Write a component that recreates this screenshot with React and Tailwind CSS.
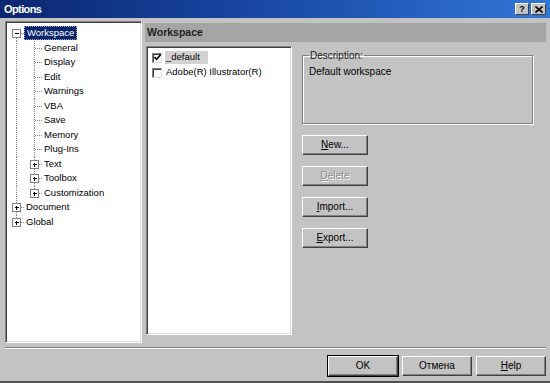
import React from 'react';

// tree rows: guide cells per indent column + optional expand box
const treeRows = [
  { label: 'Workspace', cells: ['first'], box: 'minus', selected: true },
  { label: 'General', cells: ['pipe', 'tee'] },
  { label: 'Display', cells: ['pipe', 'tee'] },
  { label: 'Edit', cells: ['pipe', 'tee'] },
  { label: 'Warnings', cells: ['pipe', 'tee'] },
  { label: 'VBA', cells: ['pipe', 'tee'] },
  { label: 'Save', cells: ['pipe', 'tee'] },
  { label: 'Memory', cells: ['pipe', 'tee'] },
  { label: 'Plug-Ins', cells: ['pipe', 'tee'] },
  { label: 'Text', cells: ['pipe', 'tee'], box: 'plus' },
  { label: 'Toolbox', cells: ['pipe', 'tee'], box: 'plus' },
  { label: 'Customization', cells: ['pipe', 'ell'], box: 'plus' },
  { label: 'Document', cells: ['tee'], box: 'plus' },
  { label: 'Global', cells: ['ell'], box: 'plus' },
];

const GuideCell = ({ type, box }) => {
  const dot = { stroke: '#8a8a8a', strokeWidth: 1, strokeDasharray: '1 1', shapeRendering: 'crispEdges' };
  return (
    <svg width="18" height="14.5" viewBox="0 0 18 14.5" className="shrink-0 overflow-visible">
      {type === 'pipe' && <line x1="9.5" y1="0" x2="9.5" y2="14.5" style={dot} />}
      {type === 'tee' && <line x1="9.5" y1="0" x2="9.5" y2="14.5" style={dot} />}
      {type === 'ell' && <line x1="9.5" y1="0" x2="9.5" y2="7.5" style={dot} />}
      {type === 'first' && <line x1="9.5" y1="7.5" x2="9.5" y2="14.5" style={dot} />}
      {type !== 'pipe' && <line x1="10" y1="7.5" x2="18" y2="7.5" style={dot} />}
      {box && (
        <g shapeRendering="crispEdges">
          <rect x="5.5" y="3.5" width="8" height="8" fill="white" stroke="#808080" />
          <line x1="7.5" y1="7.5" x2="11.5" y2="7.5" stroke="black" />
          {box === 'plus' && <line x1="9.5" y1="5.5" x2="9.5" y2="9.5" stroke="black" />}
        </g>
      )}
    </svg>
  );
};

const Btn = ({ children, w = 'w-[66px]', disabled, isDefault }) => (
  <button
    className={`${w} h-[20px] bg-[#c3c3c3] border border-t-white border-l-white border-r-[#404040] border-b-[#404040] text-[10px] leading-none ${
      isDefault
        ? 'shadow-[0_0_0_1px_#000,inset_-1px_-1px_0_#808080]'
        : 'shadow-[inset_-1px_-1px_0_#808080]'
    } ${disabled ? 'text-[#8c8c8c] [text-shadow:1px_1px_0_#fff]' : 'text-black'}`}
  >
    {children}
  </button>
);

const sunken =
  'bg-white border border-t-[#808080] border-l-[#808080] border-r-white border-b-white shadow-[inset_1px_1px_0_#404040,inset_-1px_-1px_0_#dcdcdc]';

export default function App() {
  return (
    <div className="w-[550px] h-[383px] bg-[#c3c3c3] flex flex-col border-b-2 border-b-[#505050] font-['Liberation_Sans',Arial,sans-serif] text-[10px] text-black overflow-hidden">
      {/* title bar */}
      <div className="h-[18px] shrink-0 flex items-center justify-between pl-[4px] pr-[4px] bg-gradient-to-r from-[#0b2670] via-[#1a4aa8] to-[#3277d6]">
        <span className="text-white font-bold text-[11px] tracking-[-0.6px]">Options</span>
        <div className="flex gap-[2px]">
          <div className="w-[14px] h-[12px] bg-[#c3c3c3] border border-t-white border-l-white border-r-[#404040] border-b-[#404040] flex items-center justify-center text-[9px] font-bold leading-none">
            ?
          </div>
          <div className="w-[15px] h-[12px] bg-[#c3c3c3] border border-t-white border-l-white border-r-[#404040] border-b-[#404040] flex items-center justify-center">
            <svg width="8" height="7" viewBox="0 0 8 7">
              <path d="M0.5 0.5 L7.5 6.5 M7.5 0.5 L0.5 6.5" stroke="black" strokeWidth="1.6" />
            </svg>
          </div>
        </div>
      </div>

      {/* body */}
      <div className="flex pt-[3px] pl-[5px] shrink-0">
        {/* tree */}
        <div className={`w-[137px] h-[322px] ${sunken} pt-[4px] pl-[1px]`}>
          {treeRows.map((r) => (
            <div key={r.label} className="flex items-center h-[14.5px]">
              {r.cells.map((c, i) => (
                <GuideCell key={i} type={c} box={i === r.cells.length - 1 ? r.box : null} />
              ))}
              <span
                className={`-ml-[1px] px-[2px] h-[14px] flex items-center text-[9.5px] whitespace-nowrap ${
                  r.selected ? 'bg-[#0a246a] text-white border border-dotted border-[#a0a0d0]' : ''
                }`}
              >
                {r.label}
              </span>
            </div>
          ))}
        </div>

        {/* right panel */}
        <div className="ml-[3px] w-[401px] flex flex-col">
          <div className="mt-[2px] h-[19px] bg-[#a5a5a5] flex items-center pl-[2px] font-bold text-[10.5px] text-[#1e1e1e]">
            Workspace
          </div>
          <div className="flex mt-[4px]">
            <div className={`ml-[1px] w-[146px] h-[289px] ${sunken} pt-[3px] pl-[5px]`}>
              {[
                { label: '_default', checked: true, sel: true },
                { label: 'Adobe(R) Illustrator(R)' },
              ].map((it) => (
                <div key={it.label} className="flex items-center h-[15px]">
                  <div className="w-[10px] h-[10px] bg-white border border-t-[#808080] border-l-[#808080] border-r-[#dcdcdc] border-b-[#dcdcdc] shadow-[inset_1px_1px_0_#404040] flex items-center justify-center">
                    {it.checked && (
                      <svg width="7" height="7" viewBox="0 0 7 7">
                        <path d="M0.5 3 L2.5 5.2 L6.5 0.8" stroke="black" strokeWidth="1.6" fill="none" />
                      </svg>
                    )}
                  </div>
                  <span className={`ml-[3px] px-[1px] h-[13px] flex items-center text-[9.5px] ${it.sel ? 'bg-[#d2d2d2] pr-[8px]' : ''}`}>
                    {it.label}
                  </span>
                </div>
              ))}
            </div>

            <div className="ml-[10px] w-[231px] flex flex-col">
              <fieldset className="mt-[2px] h-[76px] border border-[#808080] shadow-[inset_1px_1px_0_#fff,1px_1px_0_#fff] px-[6px]">
                <legend className="px-[1px] text-[10px] text-[#202020]">Description:</legend>
                <div className="mt-[1px]">Default workspace</div>
              </fieldset>
              <div className="mt-[11px] flex flex-col gap-[11px]">
                <Btn>
                  <span className="underline">N</span>ew...
                </Btn>
                <Btn disabled>
                  <span className="underline">D</span>elete
                </Btn>
                <Btn>
                  <span className="underline">I</span>mport...
                </Btn>
                <Btn>
                  <span className="underline">E</span>xport...
                </Btn>
              </div>
            </div>
          </div>
        </div>
      </div>

      {/* separator */}
      <div className="mt-[4px] ml-[5px] mr-[4px] h-[2px] border-t border-t-[#808080] border-b border-b-white" />

      {/* bottom buttons */}
      <div className="mt-[7px] flex justify-end gap-[4px] pr-[4px]">
        <Btn w="w-[70px]" isDefault>OK</Btn>
        <Btn w="w-[70px]">Отмена</Btn>
        <Btn w="w-[70px]">
          <span className="underline">H</span>elp
        </Btn>
      </div>
    </div>
  );
}
